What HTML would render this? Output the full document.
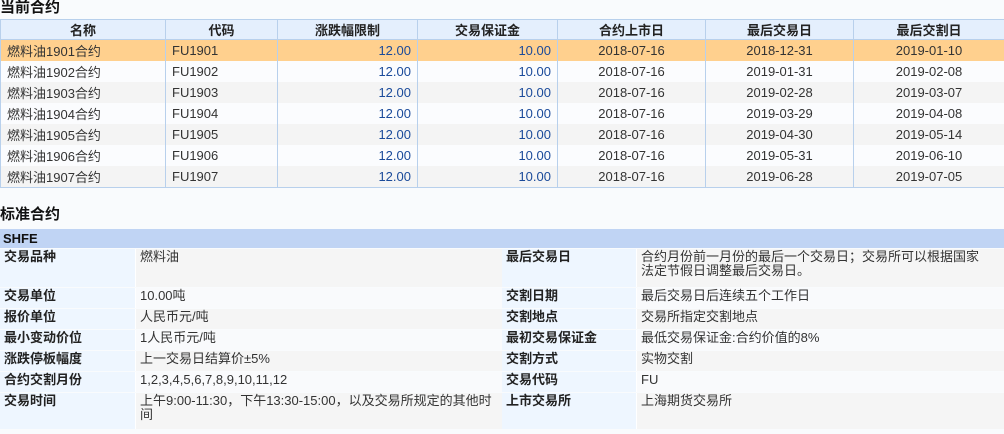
<!DOCTYPE html>
<html><head><meta charset="utf-8"><style>
body{margin:0;background:#f9fbfd;font-family:"Liberation Sans","WenQuanYi Zen Hei","Noto Sans CJK SC",sans-serif;font-size:13px;color:#333;width:1004px;height:434px;overflow:hidden;position:relative}
.t{position:absolute;left:0;font-size:15px;font-weight:bold;color:#111;line-height:16px}
table{border-collapse:collapse;position:absolute;left:0;table-layout:fixed}
#a{top:19px;width:1004px;border:1px solid #b8d0ec}
#a th{height:19px;background:#e4effd;border:1px solid #b8d0ec;font-size:13px;color:#222;padding:0}
#a td{height:21px;border-left:1px solid #b8d0ec;border-right:1px solid #b8d0ec;padding:0 6px;font-size:13px;color:#333;white-space:nowrap}
#a tr.e td{background:#f4f4f4}
#a tr.o td{background:#fbfcfe}
#a tr.s td{background:#ffd08e}
#a td.n{text-align:right;color:#1a4a9a}
#a td.c{text-align:center}
#b{top:228px;width:1004px;border-collapse:separate;border-spacing:0 1px;}
#b td{padding:1px 4px 0;vertical-align:top;line-height:14px;font-size:13px}
#b td.l{background:#eef6ff;font-weight:bold;color:#222;font-size:13px}
#b td.v{background:#f5f5f5;border-left:1px solid #fff}
#b tr.g td.v{background:#f9fafc}
.h{background:#c0d4f4;height:19px;font-weight:bold;color:#111;padding:0 3px!important;line-height:19px!important}
</style></head><body>
<div class="t" style="top:0">当前合约</div>
<table id="a">
<colgroup><col style="width:165px"><col style="width:112px"><col style="width:140px"><col style="width:140px"><col style="width:148px"><col style="width:148px"><col style="width:151px"></colgroup>
<tr><th>名称</th><th>代码</th><th>涨跌幅限制</th><th>交易保证金</th><th>合约上市日</th><th>最后交易日</th><th>最后交割日</th></tr>
<tr class="s"><td>燃料油1901合约</td><td>FU1901</td><td class="n">12.00</td><td class="n">10.00</td><td class="c">2018-07-16</td><td class="c">2018-12-31</td><td class="c">2019-01-10</td></tr>
<tr class="o"><td>燃料油1902合约</td><td>FU1902</td><td class="n">12.00</td><td class="n">10.00</td><td class="c">2018-07-16</td><td class="c">2019-01-31</td><td class="c">2019-02-08</td></tr>
<tr class="e"><td>燃料油1903合约</td><td>FU1903</td><td class="n">12.00</td><td class="n">10.00</td><td class="c">2018-07-16</td><td class="c">2019-02-28</td><td class="c">2019-03-07</td></tr>
<tr class="o"><td>燃料油1904合约</td><td>FU1904</td><td class="n">12.00</td><td class="n">10.00</td><td class="c">2018-07-16</td><td class="c">2019-03-29</td><td class="c">2019-04-08</td></tr>
<tr class="e"><td>燃料油1905合约</td><td>FU1905</td><td class="n">12.00</td><td class="n">10.00</td><td class="c">2018-07-16</td><td class="c">2019-04-30</td><td class="c">2019-05-14</td></tr>
<tr class="o"><td>燃料油1906合约</td><td>FU1906</td><td class="n">12.00</td><td class="n">10.00</td><td class="c">2018-07-16</td><td class="c">2019-05-31</td><td class="c">2019-06-10</td></tr>
<tr class="e"><td>燃料油1907合约</td><td>FU1907</td><td class="n">12.00</td><td class="n">10.00</td><td class="c">2018-07-16</td><td class="c">2019-06-28</td><td class="c">2019-07-05</td></tr>
</table>
<div class="t" style="top:207px">标准合约</div>
<table id="b">
<colgroup><col style="width:135px"><col style="width:367px"><col style="width:134px"><col style="width:368px"></colgroup>
<tr><td colspan="4" class="h">SHFE</td></tr>
<tr><td class="l" style="height:37px">交易品种</td><td class="v">燃料油</td><td class="l">最后交易日</td><td class="v">合约月份前一月份的最后一个交易日；交易所可以根据国家<br>法定节假日调整最后交易日。</td></tr>
<tr class="g"><td class="l" style="height:19px">交易单位</td><td class="v">10.00吨</td><td class="l">交割日期</td><td class="v">最后交易日后连续五个工作日</td></tr>
<tr><td class="l" style="height:19px">报价单位</td><td class="v">人民币元/吨</td><td class="l">交割地点</td><td class="v">交易所指定交割地点</td></tr>
<tr class="g"><td class="l" style="height:19px">最小变动价位</td><td class="v">1人民币元/吨</td><td class="l">最初交易保证金</td><td class="v">最低交易保证金:合约价值的8%</td></tr>
<tr><td class="l" style="height:19px">涨跌停板幅度</td><td class="v">上一交易日结算价±5%</td><td class="l">交割方式</td><td class="v">实物交割</td></tr>
<tr class="g"><td class="l" style="height:19px">合约交割月份</td><td class="v">1,2,3,4,5,6,7,8,9,10,11,12</td><td class="l">交易代码</td><td class="v">FU</td></tr>
<tr><td class="l" style="height:35px">交易时间</td><td class="v">上午9:00-11:30，下午13:30-15:00，以及交易所规定的其他时<br>间</td><td class="l">上市交易所</td><td class="v">上海期货交易所</td></tr>
</table>
</body></html>
